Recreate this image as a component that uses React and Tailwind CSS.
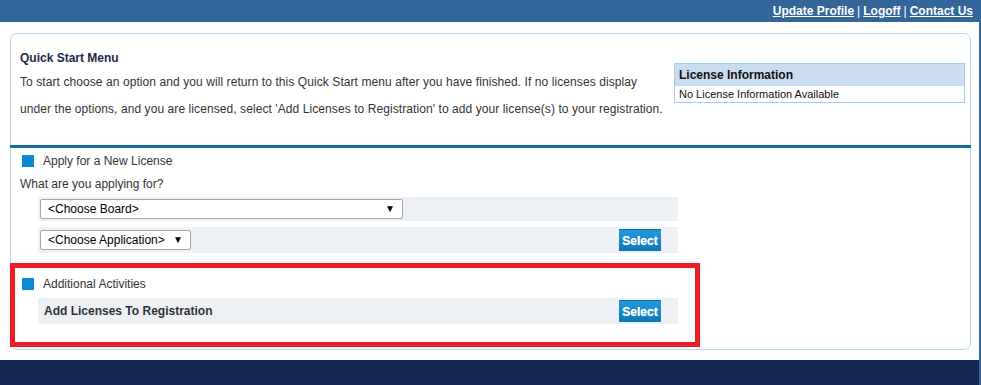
import React from 'react';

const SelectButton = () => (
  <button className="h-[22px] w-[42px] border-t border-[#0b6aa6] bg-gradient-to-b from-[#2399da] to-[#0c77b7] text-[12px] font-bold leading-none text-white [text-shadow:0_0_1px_rgba(255,255,255,0.6)]">
    Select
  </button>
);

const FakeSelect = ({ label, width }) => (
  <div
    className={`flex h-[20px] ${width} items-center justify-between rounded-[2px] border border-[#a6a6a6] bg-white pl-[7px] pr-[7px] text-[12px] text-black`}
  >
    <span>{label}</span>
    <span className="text-[10px] leading-none">▼</span>
  </div>
);

const SectionHeader = ({ title }) => (
  <div className="flex h-[14px] items-center">
    <div className="h-[12px] w-[12px] bg-[#0a8ad0]"></div>
    <span className="ml-[9px] text-[12px] text-[#333]">{title}</span>
  </div>
);

const App = () => {
  return (
    <div className="flex h-[385px] w-[981px] flex-col border-r-2 border-[#336699] bg-white font-['Liberation_Sans',Arial,sans-serif]">
      {/* top bar */}
      <div className="flex h-[22px] items-center justify-end bg-[#336699] pr-[6px] text-[12px] text-white">
        <a className="font-bold underline">Update Profile</a>
        <span className="mx-[3px]">|</span>
        <a className="font-bold underline">Logoff</a>
        <span className="mx-[3px]">|</span>
        <a className="font-bold underline">Contact Us</a>
      </div>

      <div className="pl-[10px] pt-[11px]">
        <div className="h-[317px] w-[961px] rounded-[7px] border border-[#b7d7ec] bg-white">
          {/* quick start */}
          <div className="flex h-[111px]">
            <div className="w-[663px] pl-[9px] pt-[17px]">
              <h2 className="text-[12px] font-bold leading-[14px] text-[#1c2a48]">Quick Start Menu</h2>
              <p className="mt-[4px] text-[12px] leading-[27px] tracking-[0.08px] text-[#333]">
                To start choose an option and you will return to this Quick Start menu after you have finished. If no licenses display
                <br />
                under the options, and you are licensed, select 'Add Licenses to Registration' to add your license(s) to your registration.
              </p>
            </div>
            <div className="mt-[29px] h-[40px] w-[291px] border border-[#a4cdf2]">
              <div className="flex h-[22px] items-center bg-[#c9dcf0] pl-[4px] text-[12px] font-bold text-[#111]">
                License Information
              </div>
              <div className="flex h-[16px] items-center pl-[4px] text-[11px] text-[#111]">
                No License Information Available
              </div>
            </div>
          </div>

          <div className="-mx-px h-[3px] bg-[#16709f]"></div>

          {/* apply for new license */}
          <div className="pl-[11px] pt-[6px]">
            <SectionHeader title="Apply for a New License" />
          </div>
          <div className="mt-[9px] pl-[9px] text-[12px] leading-[14px] text-[#333]">What are you applying for?</div>
          <div className="ml-[27px] mt-[6px] flex h-[24px] w-[640px] items-center bg-[#edf0f5] pl-[2px]">
            <FakeSelect label="<Choose Board>" width="w-[363px]" />
          </div>
          <div className="ml-[27px] mt-[6px] flex h-[26px] w-[640px] items-center justify-between bg-[#edf0f5] pl-[2px] pr-[17px]">
            <FakeSelect label="<Choose Application>" width="w-[151px]" />
            <SelectButton />
          </div>

          {/* additional activities */}
          <div className="-ml-px mt-[10px] h-[84px] w-[690px] border-[5px] border-[#ee1c25] pl-[7px] pt-[9px]">
            <SectionHeader title="Additional Activities" />
            <div className="ml-[16px] mt-[7px] flex h-[26px] w-[640px] items-center justify-between bg-[#edf0f5] pl-[6px] pr-[17px]">
              <span className="text-[12px] font-bold text-[#333]">Add Licenses To Registration</span>
              <SelectButton />
            </div>
          </div>
        </div>
      </div>

      {/* footer */}
      <div className="mt-[10px] flex-1 bg-[#12264f]"></div>
    </div>
  );
};

export default App;
